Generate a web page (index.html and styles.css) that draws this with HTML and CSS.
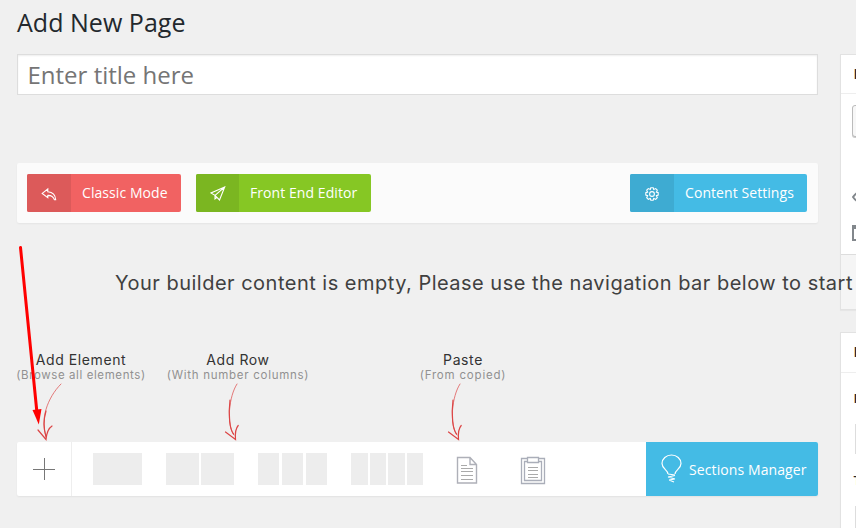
FILE: index.html
```html
<!DOCTYPE html>
<html lang="en">
<head>
<meta charset="utf-8">
<title>Add New Page</title>
<link rel="stylesheet" href="styles.css">
</head>
<body>
<div class="page">
  <main class="main">
    <h1>Add New Page</h1>
    <div class="title-field">Enter title here</div>
    <div class="actions">
      <div class="btn red"><span class="btn-icon"><svg width="16" height="16" viewBox="0 0 16 16"><path d="M6.800 2 1.200 6.400l5.600 4.300V8.400c3.300-.2 5.300.9 6.700 4.400h1.200c-.2-4.600-3-7.600-7.900-8.100z"/></svg></span><span class="btn-label">Classic Mode</span></div>
      <div class="btn green"><span class="btn-icon"><svg width="16" height="16" viewBox="0 0 16 16"><path d="M14.700 1 1 7l4 2.400L9.500 14zM14.700 1 5 9.400v3.400l2-1.600"/></svg></span><span class="btn-label">Front End Editor</span></div>
      <div class="btn blue"><span class="btn-icon"><svg width="16" height="16" viewBox="0 0 16 16"><circle cx="8" cy="8" r="2.400"/><path d="M6.800 1h2.400l.5 1.800 2-.9 1.600 1.600-.9 1.900 1.800.6v2.400l-1.800.6.9 2-1.600 1.600-2-.9-.5 1.800H6.800l-.5-1.800-2 .9L2.700 11l.9-2L1.800 8.400V6l1.800-.6-.9-1.900 1.600-1.600 2 .9z" transform="translate(0 .7)"/></svg></span><span class="btn-label">Content Settings</span></div>
    </div>
    <p class="message">Your builder content is empty, Please use the navigation bar below to start</p>
    <div class="hints">
      <div class="hint hint-element"><b>Add Element</b><span>(Browse all elements)</span></div>
      <div class="hint hint-row"><b>Add Row</b><span>(With number columns)</span></div>
      <div class="hint hint-paste"><b>Paste</b><span>(From copied)</span></div>
    </div>
    <div class="builder">
      <div class="add"><svg width="22" height="22" viewBox="0 0 22 22"><path d="M11 0v22M0 11h22"/></svg></div>
      <div class="cols one"><i></i></div>
      <div class="cols two"><i></i><i></i></div>
      <div class="cols three"><i></i><i></i><i></i></div>
      <div class="cols four"><i></i><i></i><i></i><i></i></div>
      <svg class="doc" width="22" height="29" viewBox="0 0 22 29"><path d="M1.500 1.500H14l6.500 7v18.500h-19zM14 1.500v7h6.500"/><path class="lines" d="M5 9.500h6M5 12.500h12M5 15.500h12M5 19.500h12M5 23.500h12"/></svg>
      <svg class="clip" width="26" height="29" viewBox="0 0 26 29"><path d="M7 2.500H1.500v25h23v-25H19"/><path d="M7 5.500H4.500v19h17v-19H19M7.500 1.500h11v5h-11z"/><path class="lines" d="M8 11.500h10M8 14.500h10M8 18.500h10M8 21.500h10"/></svg>
      <div class="sections"><svg width="22" height="30" viewBox="0 0 22 30"><path d="M7 20c0-4-6-5-6-10.500a9.500 8.500 0 0 1 19 0c0 5.500-6 6.500-6 10.500M7 20l7 1M7 23l7-1.500M7 23l7 2M8 26l6-1M8 26l5 2"/></svg><span>Sections Manager</span></div>
    </div>
  </main>
  <aside class="side">
    <section class="card publish">
      <h2>Publish</h2>
      <div class="card-body">
        <div class="preview">Preview</div>
        <svg class="vis" width="16" height="12" viewBox="0 0 16 12"><path d="M1 6q7-10 14 0Q8 16 1 6z"/></svg>
        <svg class="cal" width="15" height="16" viewBox="0 0 15 16"><path d="M1 1h13v14H1zM1 3h13"/></svg>
      </div>
      <div class="card-foot"></div>
    </section>
    <section class="card attributes">
      <h2>Page Attributes</h2>
      <b class="parent">Parent</b>
      <div class="select"></div>
      <b class="template">Template</b>
      <div class="select"></div>
    </section>
  </aside>
  <svg class="marks" width="856" height="528" viewBox="0 0 856 528">
    <defs>
      <g id="curve">
        <path class="fine" d="M61 384C47 398 40 420 46 436"/>
        <path d="M46 411C43 421 44 430 46 437M38 430l8 9.500c.5-5 2-11 6-13.500"/>
      </g>
      <g id="curve-narrow">
        <path class="fine" d="M237 384C229 396 226 424 234 435"/>
        <path d="M230 400C228 416 230 430 233.500 434M225.500 432l10 7.500c-.5-6 0-11 2.700-14"/>
      </g>
    </defs>
    <g class="sketch"><use href="#curve"/><use href="#curve-narrow"/><use href="#curve-narrow" x="223"/></g>
    <path class="pointer" d="M20.500 247.500 36.800 411"/>
    <path class="head" d="m32.500 410 9-1-2.700 15.500z"/>
  </svg>
</div>
</body>
</html>
```
FILE: styles.css
```css
* { box-sizing: border-box; }
body { margin: 0; background: #f0f0f0; font-family: "Open Sans", sans-serif; overflow: hidden; }
svg { display: block; fill: none; }
.page { position: relative; width: 856px; height: 528px; overflow: hidden; display: grid; grid-template-columns: 801px 280px; gap: 22px; padding-left: 17px; }
.main { position: relative; z-index: 1; min-width: 0; }
h1 { margin: 0; padding-top: 6px; height: 54px; font-size: 25px; line-height: 32px; font-weight: 400; color: #23282d; letter-spacing: .03px; white-space: nowrap; }
.title-field { height: 41px; border: 1px solid #ddd; background: #fff; box-shadow: inset 0 1px 2px rgba(0,0,0,.07); padding-left: 9.500px; font-size: 24px; line-height: 40px; color: #757575; }
.actions { margin-top: 68px; height: 60px; padding: 11px 11px 11px 10px; display: flex; background: #fbfbfb; border-radius: 2px; box-shadow: 0 1px 2px rgba(0,0,0,.05); }
.btn { display: flex; height: 38px; border-radius: 2px; overflow: hidden; color: #fff; font-size: 14px; line-height: 38px; letter-spacing: .07px; white-space: nowrap; }
.btn-icon { width: 44px; flex: none; display: flex; align-items: center; justify-content: center; padding-top: 2px; }
.btn-icon svg { stroke: #fff; stroke-width: 1.100; }
.btn-label { padding-left: 11px; }
.red { width: 154px; background: #f16262; }
.red .btn-icon { background: #dc5a5a; }
.red svg { margin-top: 1px; }
.green { width: 175px; margin-left: 15px; background: #86c724; }
.green .btn-icon { width: 43px; background: #7bb621; }
.blue { width: 177px; margin-left: auto; background: #44bbe5; }
.blue .btn-icon { background: #3eabd2; }
.message { margin: 44px 0 0 98px; height: 32px; font-family: Inter, sans-serif; font-size: 20px; line-height: 32px; color: #404040; white-space: nowrap; letter-spacing: .49px; }
.hints { display: flex; margin-top: 53px; height: 90px; }
.hint { display: flex; flex-direction: column; align-items: center; font-family: Inter, sans-serif; white-space: nowrap; }
.hint b { font-size: 14px; line-height: 16px; font-weight: 400; color: #333; letter-spacing: .6px; }
.hint span { font-size: 11.500px; line-height: 15px; color: #919191; letter-spacing: .6px; }
.hint-element { width: 128px; }
.hint-row { width: 142px; margin-left: 22px; }
.hint-row span { letter-spacing: .72px; }
.hint-paste { width: 86px; margin-left: 111px; }
.hint-paste span { letter-spacing: .8px; }
.builder { height: 54px; display: flex; align-items: center; background: #fff; border-radius: 2px; box-shadow: 0 1px 2px rgba(0,0,0,.06); }
.add { width: 55px; height: 54px; border-right: 1px solid #eee; display: flex; align-items: center; justify-content: center; }
.add svg { stroke: #777; stroke-width: 1; shape-rendering: crispEdges; }
.cols { display: flex; height: 32px; }
.cols i { flex: 1; background: #ededed; }
.one { width: 49px; margin-left: 21px; }
.two { width: 68px; margin-left: 24px; gap: 2px; }
.three { width: 69px; margin-left: 24px; gap: 3px; }
.four { width: 72px; margin-left: 24px; gap: 2px; }
.doc { margin: 3px 0 0 33px; stroke: #aeb0b8; stroke-width: 1.400; }
.clip { margin: 3px 0 0 42px; stroke: #aaaeb9; stroke-width: 1.300; }
.lines { stroke: #aaa; stroke-width: 1; }
.sections { margin-left: auto; width: 172px; height: 54px; display: flex; align-items: center; padding-left: 15px; background: #44bbe5; color: #fff; font-size: 14px; letter-spacing: .1px; border-radius: 0 2px 2px 0; white-space: nowrap; }
.sections svg { stroke: #fff; stroke-width: 1.200; margin-right: 6px; margin-top: -1px; }
.side { padding-top: 54px; }
.card { border: 1px solid #e2e2e2; background: #fff; overflow: hidden; box-shadow: 0 1px 1px rgba(0,0,0,.04); }
.card h2 { margin: 0; height: 39px; padding-left: 12.500px; font-size: 14px; font-weight: 600; line-height: 38px; color: #23282d; border-bottom: 1px solid #eee; }
.publish { height: 256px; margin-bottom: 22px; }
.card-body { height: 160px; padding: 11px 0 0 11px; }
.preview { width: 90px; height: 32px; border: 1px solid #bbb; border-radius: 3px; background: #f7f7f7; box-shadow: 0 1px 0 #ccc; font-size: 13px; line-height: 30px; padding-left: 12px; }
.vis { margin-top: 54px; stroke: #82878c; stroke-width: 2; }
.cal { margin-top: 22px; stroke: #82878c; stroke-width: 2; }
.card-foot { height: 56px; border-top: 1px solid #ddd; background: #f5f5f5; }
.attributes { height: 260px; }
.attributes h2 { height: 40px; }
.attributes b { display: block; padding-left: 12.500px; font-size: 13px; font-weight: 600; line-height: 18px; color: #23282d; }
.parent { margin-top: 16px; }
.template { margin: 17px 0 17px; }
.select { height: 30px; margin: 17px 14px 0; border: 1px solid #ddd; }
.marks { position: absolute; left: 0; top: 0; z-index: 2; pointer-events: none; }
.sketch { stroke: #dc4545; stroke-width: 1.200; stroke-linecap: round; }
.fine { stroke-width: .7; }
.pointer { stroke: #f00; stroke-width: 3; stroke-linecap: round; }
.head { fill: #f00; }
```
